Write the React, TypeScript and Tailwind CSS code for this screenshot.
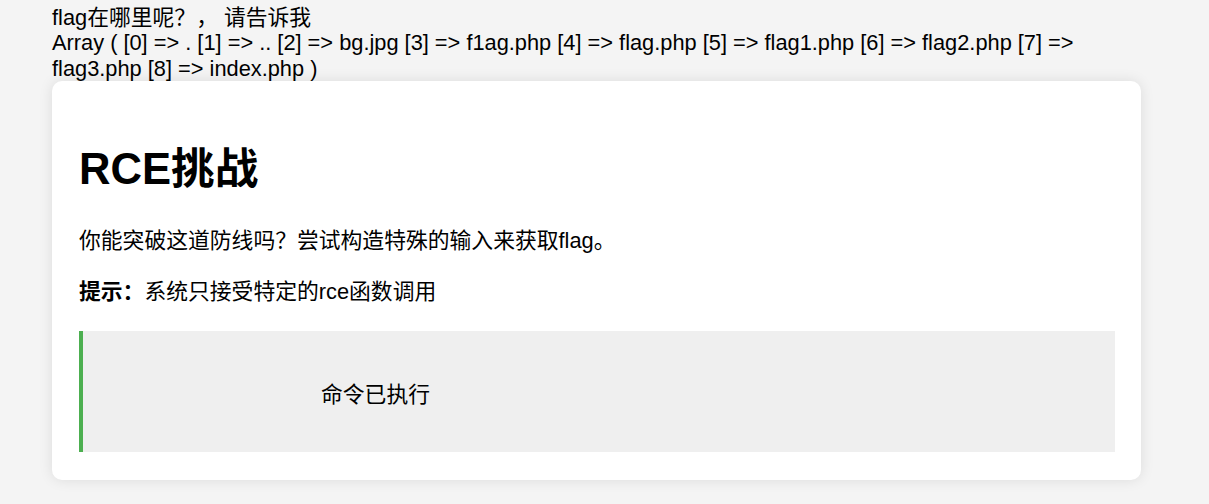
const files = [
  '.',
  '..',
  'bg.jpg',
  'f1ag.php',
  'flag.php',
  'flag1.php',
  'flag2.php',
  'flag3.php',
  'index.php',
]

export default function App() {
  const listing = `Array ( ${files.map((f, i) => `[${i}] => ${f}`).join(' ')} )`

  return (
    <div className="min-h-screen bg-[#f4f4f4] font-['Liberation_Sans','Noto_Sans_CJK_SC',sans-serif] text-[21.8px] text-black">
      <div className="ml-[52px] w-[1089px] pt-[5px]">
        <div className="leading-[25.4px]">
          flag在哪里呢？， 请告诉我
          <br />
          {listing}
        </div>

        <div className="rounded-[10px] bg-white pt-[27px] pr-[26px] pb-[28px] pl-[27px] shadow-[0_0_14px_rgba(0,0,0,0.1)]">
          <h1 className="mt-[36px] mb-[30.5px] text-[43.6px] leading-[51px] font-bold">
            RCE挑战
          </h1>
          <p className="leading-[29px]">
            你能突破这道防线吗？尝试构造特殊的输入来获取flag。
          </p>
          <p className="mt-[22px] leading-[29px]">
            <strong>提示：</strong>系统只接受特定的rce函数调用
          </p>
          <div className="mt-[25.5px] flex h-[121px] items-center border-l-4 border-[#4caf50] bg-[#efefef] pt-[7px] pl-[238px]">
            命令已执行
          </div>
        </div>
      </div>
    </div>
  )
}
